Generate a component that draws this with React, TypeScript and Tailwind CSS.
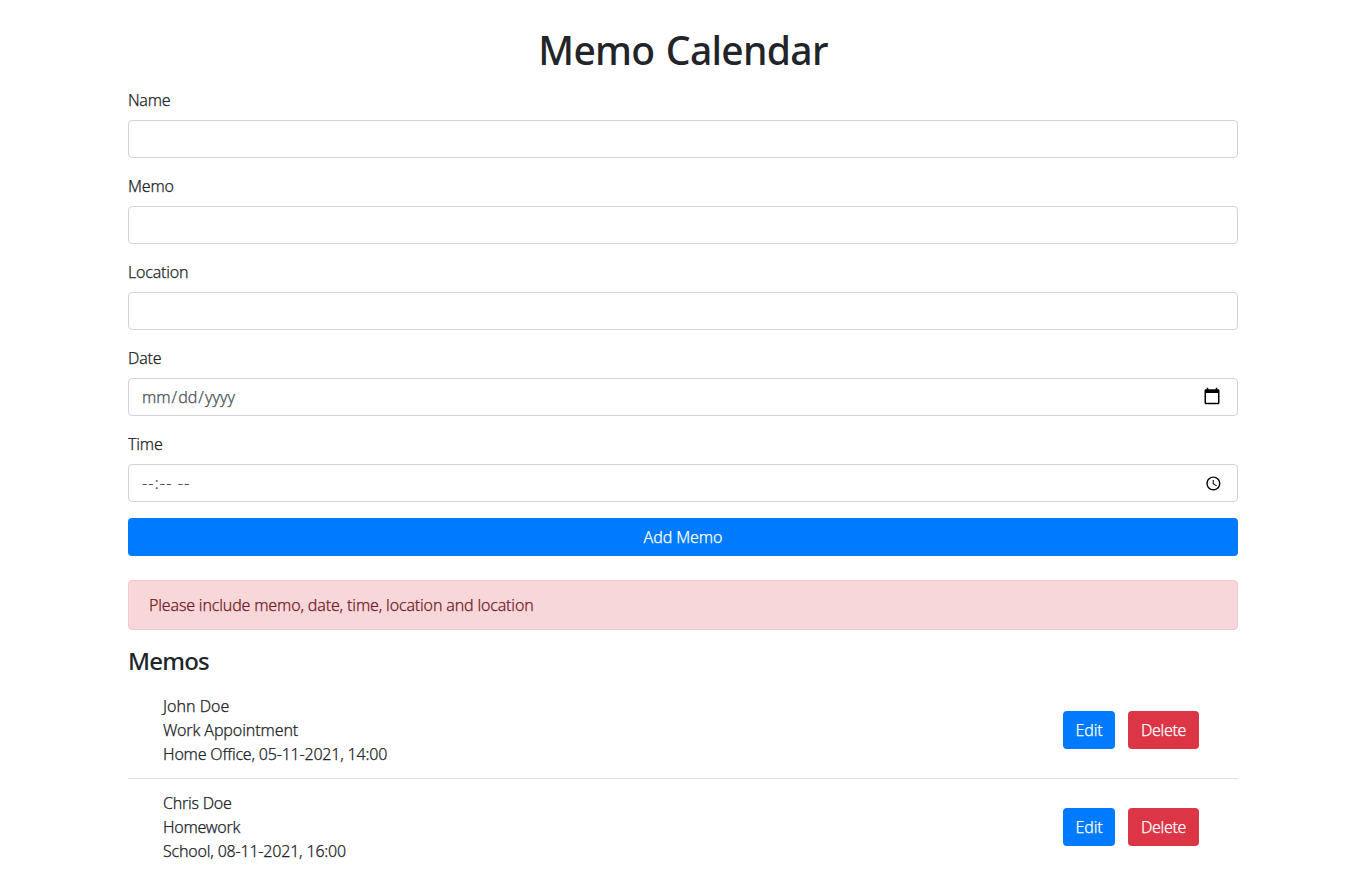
type Memo = {
  name: string;
  title: string;
  details: string;
  spacing: [string, string, string];
};

const fields = [
  { id: "name", label: "Name", type: "text", spacing: "tracking-[-0.3px]", input: "px-3" },
  { id: "memo", label: "Memo", type: "text", spacing: "tracking-[-0.2px]", input: "px-3" },
  { id: "location", label: "Location", type: "text", spacing: "tracking-[-0.2px]", input: "px-3" },
  {
    id: "date",
    label: "Date",
    type: "date",
    spacing: "tracking-[-0.2px]",
    input: "px-3 [&::-webkit-calendar-picker-indicator]:opacity-0",
  },
  {
    id: "time",
    label: "Time",
    type: "text",
    spacing: "tracking-[-0.2px]",
    placeholder: "--:-- --",
    input: "px-[13px] tracking-[1.2px] placeholder:text-[#495057] placeholder:opacity-100",
  },
];

const memos: Memo[] = [
  {
    name: "John Doe",
    title: "Work Appointment",
    details: "Home Office, 05-11-2021, 14:00",
    spacing: ["tracking-[0px]", "tracking-[-0.12px]", "tracking-[-0.2px]"],
  },
  {
    name: "Chris Doe",
    title: "Homework",
    details: "School, 08-11-2021, 16:00",
    spacing: ["tracking-[-0.25px]", "tracking-[-0.25px]", "tracking-[-0.2px]"],
  },
];

function CalendarIcon() {
  return (
    <svg
      viewBox="0 0 24 24"
      className="pointer-events-none absolute top-[9px] right-[17px] size-[18px] fill-black"
      aria-hidden="true"
    >
      <path d="M20 3h-1V1h-2v2H7V1H5v2H4c-1.1 0-2 .9-2 2v16c0 1.1.9 2 2 2h16c1.1 0 2-.9 2-2V5c0-1.1-.9-2-2-2zm0 18H4V8h16v13z" />
    </svg>
  );
}

function ClockIcon() {
  return (
    <svg
      viewBox="0 0 24 24"
      className="pointer-events-none absolute top-[10.6px] right-[16.6px] size-[16.8px] fill-black"
      aria-hidden="true"
    >
      <path d="M11.99 2C6.47 2 2 6.48 2 12s4.47 10 9.99 10C17.52 22 22 17.52 22 12S17.52 2 11.99 2zM12 20c-4.42 0-8-3.58-8-8s3.58-8 8-8 8 3.58 8 8-3.58 8-8 8zm.5-13H11v6l5.25 3.15.75-1.23-4.5-2.67z" />
    </svg>
  );
}

function MemoRow({ memo }: { memo: Memo }) {
  return (
    <li className="flex items-center justify-between border-b border-[#dfdfdf] py-3 pr-[39px] pl-[35px] last:border-b-0">
      <div>
        <p className={memo.spacing[0]}>{memo.name}</p>
        <p className={memo.spacing[1]}>{memo.title}</p>
        <p className={memo.spacing[2]}>{memo.details}</p>
      </div>
      <div className="flex gap-[13px]">
        <button className="h-[38px] w-[52px] rounded bg-[#007bff] tracking-[-0.2px] text-white">Edit</button>
        <button className="h-[38px] w-[71px] rounded bg-[#dc3545] tracking-[-0.3px] text-white">Delete</button>
      </div>
    </li>
  );
}

export default function App() {
  return (
    <main className="mx-auto h-[891px] w-[1110px] overflow-hidden bg-white pt-[26px] font-['Noto_Sans',sans-serif] text-base leading-6 font-light text-[#212529] [-webkit-text-stroke:0.25px]">
      <h1 className="mb-3.5 text-center text-[39px] leading-[48px] font-medium tracking-[-0.7px] [word-spacing:2px] [-webkit-text-stroke:0px]">
        Memo Calendar
      </h1>
      <form className="flex flex-col gap-4">
        {fields.map((field) => (
          <div key={field.id}>
            <label htmlFor={field.id} className={`mb-2 block ${field.spacing}`}>
              {field.label}
            </label>
            <div className="relative">
              <input
                id={field.id}
                type={field.type}
                placeholder={field.placeholder}
                className={`block h-[38px] w-full rounded border border-[#ced4da] bg-white py-1.5 text-[#495057] ${field.input}`}
              />
              {field.id === "date" && <CalendarIcon />}
              {field.id === "time" && <ClockIcon />}
            </div>
          </div>
        ))}
        <button type="button" className="h-[38px] w-full rounded bg-[#007bff] tracking-[-0.1px] text-white">
          Add Memo
        </button>
      </form>
      <div className="mt-6 h-[50px] rounded border border-[#f5c6cb] bg-[#f8d7da] px-5 py-3 tracking-[-0.17px] text-[#721c24]">
        Please include memo, date, time, location and location
      </div>
      <h4 className="mt-4 mb-2 h-7 text-2xl leading-[30px] font-medium tracking-[-0.8px] [-webkit-text-stroke:0px]">
        Memos
      </h4>
      <ul>
        {memos.map((memo) => (
          <MemoRow key={memo.name} memo={memo} />
        ))}
      </ul>
    </main>
  );
}
